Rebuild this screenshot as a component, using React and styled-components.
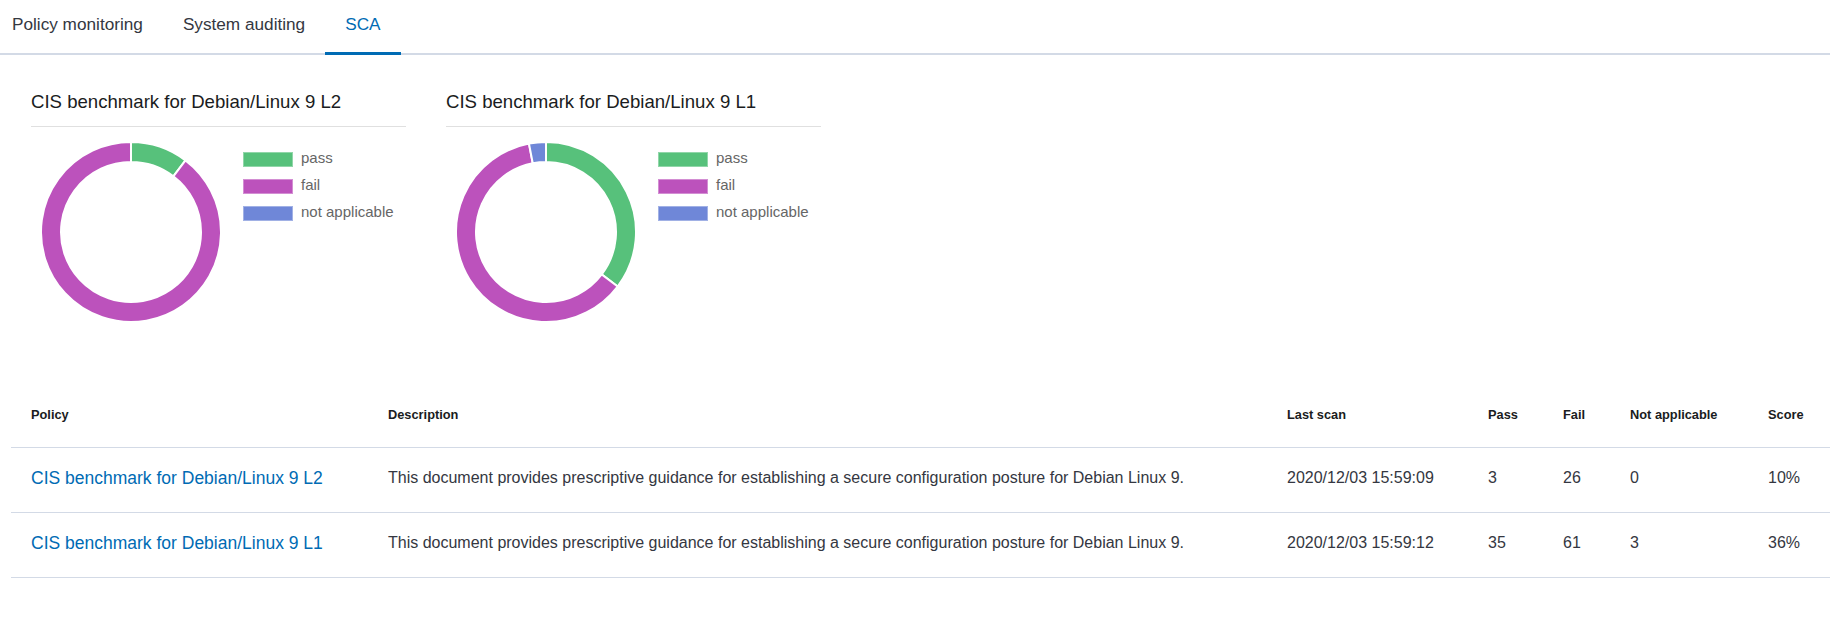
import React from "react";
import styled, { createGlobalStyle } from "styled-components";

const Colors = {
  text: "#343741",
  heading: "#1a1c21",
  link: "#006bb4",
  border: "#d3dae6",
  rule: "#e0e0e0",
  legend: "#666666",
  pass: "#57c17b",
  fail: "#bc52bc",
  na: "#6f87d8"
};

const GlobalStyle = createGlobalStyle`
  body {
    margin: 0;
    background: #fff;
    font-family: "Liberation Sans", Arial, sans-serif;
    color: ${Colors.text};
  }
`;

const Page = styled.div`
  width: 1830px;
  overflow: hidden;
`;

const TabBar = styled.div`
  display: flex;
  height: 55px;
  box-shadow: inset 0 -2px 0 ${Colors.border};
`;

const TabList = styled.div`
  display: flex;
  margin-left: -8px;
`;

const Tab = styled.div`
  box-sizing: border-box;
  height: 55px;
  padding: 0 20px;
  line-height: 48px;
  font-size: 17.2px;
  color: ${p => (p.$active ? Colors.link : Colors.text)};
  border-bottom: 3px solid ${p => (p.$active ? Colors.link : "transparent")};
  cursor: pointer;
`;

const ChartsRow = styled.div`
  display: flex;
  gap: 40px;
  padding: 35px 0 0 31px;
`;

const ChartCard = styled.div`
  width: 375px;
`;

const ChartTitle = styled.h3`
  margin: 0;
  font-size: 18.6px;
  font-weight: 400;
  line-height: 24px;
  color: ${Colors.heading};
  padding-bottom: 12px;
  border-bottom: 1px solid ${Colors.rule};
`;

const ChartBody = styled.div`
  display: flex;
  gap: 22px;
  padding: 15px 0 0 10px;
`;

const Legend = styled.ul`
  list-style: none;
  margin: 10px 0 0;
  padding: 0;
  display: flex;
  flex-direction: column;
  gap: 12px;
`;

const LegendItem = styled.li`
  display: flex;
  align-items: center;
  gap: 8px;
  height: 15px;
  font-size: 15px;
  color: ${Colors.legend};
`;

const LegendLabel = styled.span`
  margin-top: -5px;
`;

const Swatch = styled.span`
  width: 50px;
  height: 15px;
  background: ${p => p.$color};
  box-shadow: inset 0 0 0 1px rgba(255, 255, 255, 0.35);
`;

const Table = styled.div`
  margin: 63px 0 0 11px;
`;

const Row = styled.div`
  display: grid;
  grid-template-columns: 357px 899px 201px 75px 67px 138px 1fr;
  align-items: center;
  height: ${p => (p.$head ? "62px" : "64px")};
  border-bottom: 1px solid ${Colors.border};
`;

const HeadCell = styled.div`
  padding: 0 0 4px 20px;
  font-size: 12.8px;
  font-weight: 700;
  color: ${Colors.heading};
`;

const Cell = styled.div`
  padding: 0 0 4px 20px;
  font-size: 16px;
  color: ${Colors.text};
  white-space: nowrap;
`;

const PolicyLink = styled.a`
  font-size: 17.5px;
  color: ${Colors.link};
  text-decoration: none;
  cursor: pointer;
`;

const policies = [
  {
    name: "CIS benchmark for Debian/Linux 9 L2",
    description:
      "This document provides prescriptive guidance for establishing a secure configuration posture for Debian Linux 9.",
    lastScan: "2020/12/03 15:59:09",
    pass: 3,
    fail: 26,
    na: 0,
    score: "10%"
  },
  {
    name: "CIS benchmark for Debian/Linux 9 L1",
    description:
      "This document provides prescriptive guidance for establishing a secure configuration posture for Debian Linux 9.",
    lastScan: "2020/12/03 15:59:12",
    pass: 35,
    fail: 61,
    na: 3,
    score: "36%"
  }
];

function slicePath(cx, cy, r0, r1, a0, a1) {
  const pt = (r, a) => [cx + r * Math.sin(a), cy - r * Math.cos(a)];
  const large = a1 - a0 > Math.PI ? 1 : 0;
  const [x1, y1] = pt(r1, a0);
  const [x2, y2] = pt(r1, a1);
  const [x3, y3] = pt(r0, a1);
  const [x4, y4] = pt(r0, a0);
  return `M${x1} ${y1} A${r1} ${r1} 0 ${large} 1 ${x2} ${y2} L${x3} ${y3} A${r0} ${r0} 0 ${large} 0 ${x4} ${y4} Z`;
}

function Donut({ values }) {
  const total = values.reduce((s, v) => s + v.value, 0);
  let angle = 0;
  return (
    <svg width="180" height="180" viewBox="0 0 180 180">
      {values.map(v => {
        if (!v.value) return null;
        const a0 = angle;
        const a1 = angle + (v.value / total) * Math.PI * 2;
        angle = a1;
        return (
          <path
            key={v.label}
            d={slicePath(90, 90, 70, 90, a0, a1)}
            fill={v.color}
            stroke="#fff"
            strokeWidth="2"
          />
        );
      })}
    </svg>
  );
}

function PolicyChart({ policy }) {
  const values = [
    { label: "pass", value: policy.pass, color: Colors.pass },
    { label: "fail", value: policy.fail, color: Colors.fail },
    { label: "not applicable", value: policy.na, color: Colors.na }
  ];
  return (
    <ChartCard>
      <ChartTitle>{policy.name}</ChartTitle>
      <ChartBody>
        <Donut values={values} />
        <Legend>
          {values.map(v => (
            <LegendItem key={v.label}>
              <Swatch $color={v.color} />
              <LegendLabel>{v.label}</LegendLabel>
            </LegendItem>
          ))}
        </Legend>
      </ChartBody>
    </ChartCard>
  );
}

export default function App() {
  return (
    <Page>
      <GlobalStyle />
      <TabBar>
        <TabList>
          <Tab>Policy monitoring</Tab>
          <Tab>System auditing</Tab>
          <Tab $active>SCA</Tab>
        </TabList>
      </TabBar>

      <ChartsRow>
        {policies.map(p => (
          <PolicyChart key={p.name} policy={p} />
        ))}
      </ChartsRow>

      <Table>
        <Row $head>
          <HeadCell>Policy</HeadCell>
          <HeadCell>Description</HeadCell>
          <HeadCell>Last scan</HeadCell>
          <HeadCell>Pass</HeadCell>
          <HeadCell>Fail</HeadCell>
          <HeadCell>Not applicable</HeadCell>
          <HeadCell>Score</HeadCell>
        </Row>
        {policies.map(p => (
          <Row key={p.name}>
            <Cell>
              <PolicyLink>{p.name}</PolicyLink>
            </Cell>
            <Cell>{p.description}</Cell>
            <Cell>{p.lastScan}</Cell>
            <Cell>{p.pass}</Cell>
            <Cell>{p.fail}</Cell>
            <Cell>{p.na}</Cell>
            <Cell>{p.score}</Cell>
          </Row>
        ))}
      </Table>
    </Page>
  );
}
